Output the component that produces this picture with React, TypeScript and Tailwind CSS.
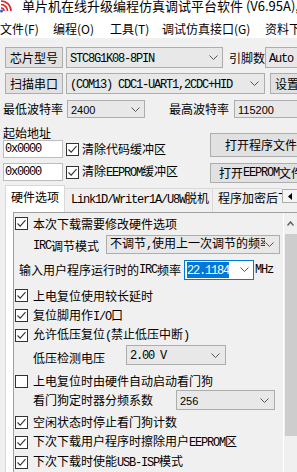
import React from "react";

type Kids = { children?: React.ReactNode; className?: string };

// SimSun-like latin runs (6px per char)
function M({ children }: Kids) {
  return (
    <span className="font-['Liberation_Mono',monospace] text-[12px] tracking-[-1.2px]">
      {children}
    </span>
  );
}

function Chevron() {
  return (
    <svg width="9" height="5" viewBox="0 0 9 5" className="shrink-0">
      <path d="M0.5 0.5 L4.5 4.5 L8.5 0.5" fill="none" stroke="#555" strokeWidth="1" />
    </svg>
  );
}

function Check({ checked = true }: { checked?: boolean }) {
  return (
    <span className="flex h-[13px] w-[13px] shrink-0 items-center justify-center border border-[#333] bg-white">
      {checked && (
        <svg width="11" height="11" viewBox="0 0 11 11">
          <path d="M1.5 5.5 L4.2 8.2 L9.5 2.2" fill="none" stroke="#333" strokeWidth="1.1" />
        </svg>
      )}
    </span>
  );
}

function Btn({ children, className = "" }: Kids) {
  return (
    <div
      className={`flex shrink-0 items-center justify-center border border-[#adadad] bg-[#e1e1e1] leading-[14px] whitespace-nowrap ${className}`}
    >
      {children}
    </div>
  );
}

function Select({ children, className = "" }: Kids) {
  return (
    <div
      className={`flex shrink-0 items-center border border-[#adadad] bg-[#e8e8e8] pl-[3px] pr-[4px] ${className}`}
    >
      <div className="min-w-0 flex-1 overflow-hidden whitespace-nowrap leading-[14px]">{children}</div>
      <Chevron />
    </div>
  );
}

function CheckRow({ children, checked = true, className = "" }: Kids & { checked?: boolean }) {
  return (
    <div className={`flex items-center gap-[5px] pl-[1px] leading-[14px] whitespace-nowrap ${className}`}>
      <Check checked={checked} />
      <span>{children}</span>
    </div>
  );
}

const menus = [
  { label: "文件(F)", w: "w-[53px]" },
  { label: "编程(O)", w: "w-[57px]" },
  { label: "工具(T)", w: "w-[52px]" },
  { label: "调试仿真接口(G)", w: "w-[103px]" },
  { label: "资料下载(D)", w: "w-[80px]" },
];

export default function App() {
  return (
    <div className="h-[472px] w-[297px] overflow-hidden bg-[#f0f0f0] font-['Noto_Sans_CJK_SC',sans-serif] text-[12px] text-black">
      {/* Title bar */}
      <div className="flex h-[18px] items-start bg-white">
        <svg width="12" height="13" viewBox="0 0 12 13" className="shrink-0">
          <path d="M1 8 A3 3 0 0 1 4 11" fill="none" stroke="#e0262a" strokeWidth="1.6" />
          <path d="M1 4.5 A6.5 6.5 0 0 1 7.5 11" fill="none" stroke="#e0262a" strokeWidth="1.6" />
          <path d="M1 1 A10 10 0 0 1 11 11" fill="none" stroke="#e0262a" strokeWidth="1.6" />
          <circle cx="1.5" cy="11" r="1.5" fill="#2a5bd7" />
        </svg>
        <span className="ml-[10px] whitespace-nowrap text-[13px] leading-[11px]">
          单片机在线升级编程仿真调试平台软件 (V6.95A), 远程调试
        </span>
      </div>

      {/* Menu bar */}
      <div className="flex h-[20px] bg-white pt-[2px] leading-[18px] whitespace-nowrap">
        {menus.map((m) => (
          <span key={m.label} className={`shrink-0 ${m.w}`}>
            {m.label}
          </span>
        ))}
      </div>

      {/* Chip / port rows */}
      <div className="mt-[9px] flex h-[21px]">
        <Btn className="ml-[5px] w-[58px]">芯片型号</Btn>
        <Select className="ml-[3px] w-[157px]">
          <M>STC8G1K08-8PIN</M>
        </Select>
        <span className="ml-[6px] flex w-[36px] shrink-0 items-center">引脚数</span>
        <Select className="w-[60px]">
          <M>Auto</M>
        </Select>
      </div>

      <div className="mt-[5px] flex h-[21px]">
        <Btn className="ml-[5px] w-[58px]">扫描串口</Btn>
        <Select className="ml-[3px] w-[199px] pr-[5px]">
          <M>(COM13) CDC1-UART1,2CDC+HID</M>
        </Select>
        <Btn className="ml-[5px] w-[34px]">设置</Btn>
      </div>

      <div className="mt-[6px] flex h-[18px] items-stretch">
        <span className="ml-[3px] flex w-[64px] shrink-0 items-center">最低波特率</span>
        <Select className="w-[78px]">
          <span className="font-['Liberation_Sans',sans-serif] text-[11px]">2400</span>
        </Select>
        <span className="ml-[24px] flex w-[65px] shrink-0 items-center">最高波特率</span>
        <Select className="w-[80px]">
          <span className="font-['Liberation_Sans',sans-serif] text-[11px]">115200</span>
        </Select>
      </div>

      {/* Address + file buttons */}
      <div className="flex">
        <div className="ml-[3px] flex w-[207px] shrink-0 flex-col">
          <span className="mt-[8px] h-[14px] leading-[14px]">起始地址</span>
          <div className="flex h-[18px] items-center">
            <div className="flex h-full w-[60px] shrink-0 items-center border border-[#bdbdbd] bg-white pl-[1px]">
              <M>0x0000</M>
            </div>
            <div className="ml-[3px] flex items-center gap-[3px] leading-[14px] whitespace-nowrap">
              <Check />
              <span>清除代码缓冲区</span>
            </div>
          </div>
          <div className="mt-[5px] flex h-[18px] items-center">
            <div className="flex h-full w-[60px] shrink-0 items-center border border-[#bdbdbd] bg-white pl-[1px]">
              <M>0x0000</M>
            </div>
            <div className="ml-[3px] flex items-center gap-[3px] leading-[14px] whitespace-nowrap">
              <Check />
              <span>
                清除<M>EEPROM</M>缓冲区
              </span>
            </div>
          </div>
        </div>
        <div className="flex flex-col">
          <Btn className="mt-[15px] h-[24px] w-[102px]">打开程序文件</Btn>
          <Btn className="mt-[6px] h-[20px] w-[102px]">
            打开<M>EEPROM</M>文件
          </Btn>
        </div>
      </div>

      {/* Tabs */}
      <div className="mt-[2px] flex h-[27px] items-end whitespace-nowrap leading-[14px]">
        <div className="ml-[5px] h-[27px] w-[60px] shrink-0 border-x border-t border-[#d9d9d9] bg-white pt-[4px] text-center">
          硬件选项
        </div>
        <div className="h-[24px] w-[148px] shrink-0 border-r border-t border-[#d9d9d9] pl-[6px] pt-[2px]">
          <M>Link1D/Writer1A/U8W</M>脱机
        </div>
        <div className="h-[24px] w-[69px] shrink-0 overflow-hidden border-t border-[#d9d9d9] pl-[5px] pt-[2px]">
          程序加密后下载
        </div>
        <div className="mb-[9px] flex h-[14px] w-[16px] shrink-0 items-center justify-center border border-[#adadad] bg-[#f4f4f4]">
          <svg width="4" height="7" viewBox="0 0 4 7">
            <path d="M4 0 L0 3.5 L4 7 Z" fill="#000" />
          </svg>
        </div>
      </div>

      {/* Tab page */}
      <div className="flex h-[260px]">
        <div className="ml-[5px] w-[8px] shrink-0 border-l border-[#d9d9d9] bg-white" />
        <div className="flex flex-1 border-l border-t border-[#a0a0a0]">
          <div className="flex flex-1 flex-col overflow-hidden">
            <CheckRow className="mt-[1px] h-[20px]">本次下载需要修改硬件选项</CheckRow>

            <div className="mt-[1px] flex h-[19px] items-stretch">
              <span className="ml-[19px] flex w-[73px] shrink-0 items-center pt-[4px] leading-[14px]">
                <M>IRC</M>调节模式
              </span>
              <Select className="w-[174px] pr-[5px]">
                不调节<M>,</M>使用上一次调节的频率
              </Select>
            </div>

            <div className="mt-[6px] flex h-[20px] items-stretch whitespace-nowrap">
              <span className="ml-[5px] flex w-[165px] shrink-0 items-center leading-[14px]">
                输入用户程序运行时的<M>IRC</M>频率
              </span>
              <div className="flex w-[70px] shrink-0 items-center border border-[#0078d7] bg-white pl-[2px] pr-[4px]">
                <span className="flex h-[13px] flex-1 items-center">
                  <span className="bg-[#0078d7] leading-[13px] text-white">
                    <M>22.1184</M>
                  </span>
                </span>
                <Chevron />
              </div>
              <span className="ml-[1px] flex items-center">
                <M>MHz</M>
              </span>
            </div>

            <CheckRow className="mt-[6px] h-[20px]">上电复位使用较长延时</CheckRow>
            <CheckRow className="h-[20px]">
              复位脚用作<M>I/O</M>口
            </CheckRow>
            <CheckRow className="h-[20px]">
              允许低压复位<M>(</M>禁止低压中断<M>)</M>
            </CheckRow>

            <div className="flex h-[20px] items-stretch">
              <span className="ml-[19px] flex w-[93px] shrink-0 items-center pt-[6px] leading-[14px]">
                低压检测电压
              </span>
              <Select className="w-[100px] pr-[5px]">
                <M>2.00 V</M>
              </Select>
            </div>

            <CheckRow checked={false} className="mt-[7px] h-[18px]">
              上电复位时由硬件自动启动看门狗
            </CheckRow>

            <div className="flex h-[20px] items-stretch">
              <span className="ml-[19px] flex w-[143px] shrink-0 items-center leading-[14px]">
                看门狗定时器分频系数
              </span>
              <Select className="w-[99px] pr-[5px]">
                <span className="font-['Liberation_Sans',sans-serif] text-[11px]">256</span>
              </Select>
            </div>

            <CheckRow className="mt-[2px] h-[20px]">空闲状态时停止看门狗计数</CheckRow>
            <CheckRow className="h-[20px]">
              下次下载用户程序时擦除用户<M>EEPROM</M>区
            </CheckRow>
            <CheckRow className="h-[20px]">
              下次下载时使能<M>USB-ISP</M>模式
            </CheckRow>
          </div>

          {/* Vertical scrollbar */}
          <div className="flex w-[14px] shrink-0 flex-col border-l border-white bg-[#f0f0f0]">
            <div className="flex h-[21px] items-center justify-center">
              <svg width="7" height="5" viewBox="0 0 7 5">
                <path d="M0.5 4.5 L3.5 1 L6.5 4.5" fill="none" stroke="#606060" strokeWidth="1.5" />
              </svg>
            </div>
            <div className="ml-[1px] h-[202px] bg-[#cdcdcd]" />
          </div>
        </div>
      </div>
    </div>
  );
}
